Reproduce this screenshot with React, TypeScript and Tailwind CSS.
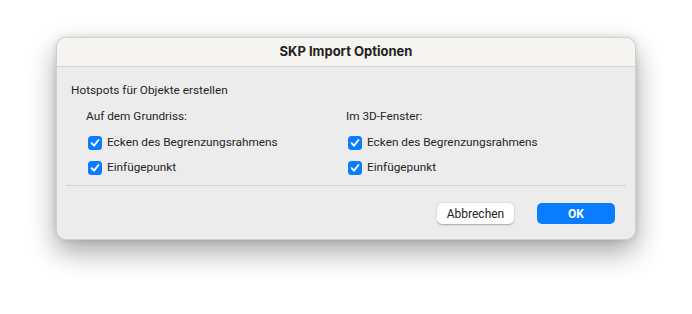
import React from 'react';

function Check({ label }: { label: string }) {
  return (
    <label className="flex items-center h-[20px] pl-[2px] gap-[5px]">
      <span className="w-[14px] h-[14px] rounded-[3.5px] bg-[#0a7cff] flex items-center justify-center">
        <svg width="10" height="10" viewBox="0 0 10 10">
          <path d="M1.6 5.2 L4 7.7 L8.5 2" fill="none" stroke="white" strokeWidth="1.9" strokeLinecap="round" strokeLinejoin="round" />
        </svg>
      </span>
      <span>{label}</span>
    </label>
  );
}

export default function App() {
  return (
    <div className="w-[692px] h-[314px] bg-white pt-[37px] pl-[56px] text-[#262626] text-[11.8px]" style={{ fontFamily: 'Roboto, "Liberation Sans", sans-serif' }}>
      <div className="w-[580px] h-[203px] rounded-[10px] bg-[#ececec] overflow-hidden border border-[#d0d0d0] shadow-[0_12px_28px_rgba(0,0,0,0.35),0_0_6px_rgba(0,0,0,0.12)] flex flex-col">
        {/* Title */}
        <div className="h-[29px] shrink-0 bg-[#f6f4f1] border-b border-[#d6d6d6] flex items-center justify-center font-bold text-[13px] text-[#222]" style={{ fontFamily: 'Inter, sans-serif' }}>
          SKP Import Optionen
        </div>

        <div className="pt-[15px] px-[14px] leading-[16px]">Hotspots für Objekte erstellen</div>

        <div className="grid grid-cols-[260px_260px] pl-[29px] mt-[10px]">
          <div>
            <div className="leading-[16px] mb-[9px]">Auf dem Grundriss:</div>
            <Check label="Ecken des Begrenzungsrahmens" />
            <div className="h-[5px]" />
            <Check label="Einfügepunkt" />
          </div>
          <div>
            <div className="leading-[16px] mb-[9px]">Im 3D-Fenster:</div>
            <Check label="Ecken des Begrenzungsrahmens" />
            <div className="h-[5px]" />
            <Check label="Einfügepunkt" />
          </div>
        </div>

        <div className="mx-[9px] mt-[7px] border-t border-[#d4d4d4]" />

        <div className="flex justify-end gap-[23px] pr-[20px] mt-[17px]">
          <button className="w-[77px] h-[21px] rounded-[5px] bg-white shadow-[0_0.5px_1.5px_rgba(0,0,0,0.3)] text-[12px] text-[#222]">
            Abbrechen
          </button>
          <button className="w-[78px] h-[21px] rounded-[5px] bg-[#0a7cff] text-white font-bold text-[12px]">
            OK
          </button>
        </div>
      </div>
    </div>
  );
}
